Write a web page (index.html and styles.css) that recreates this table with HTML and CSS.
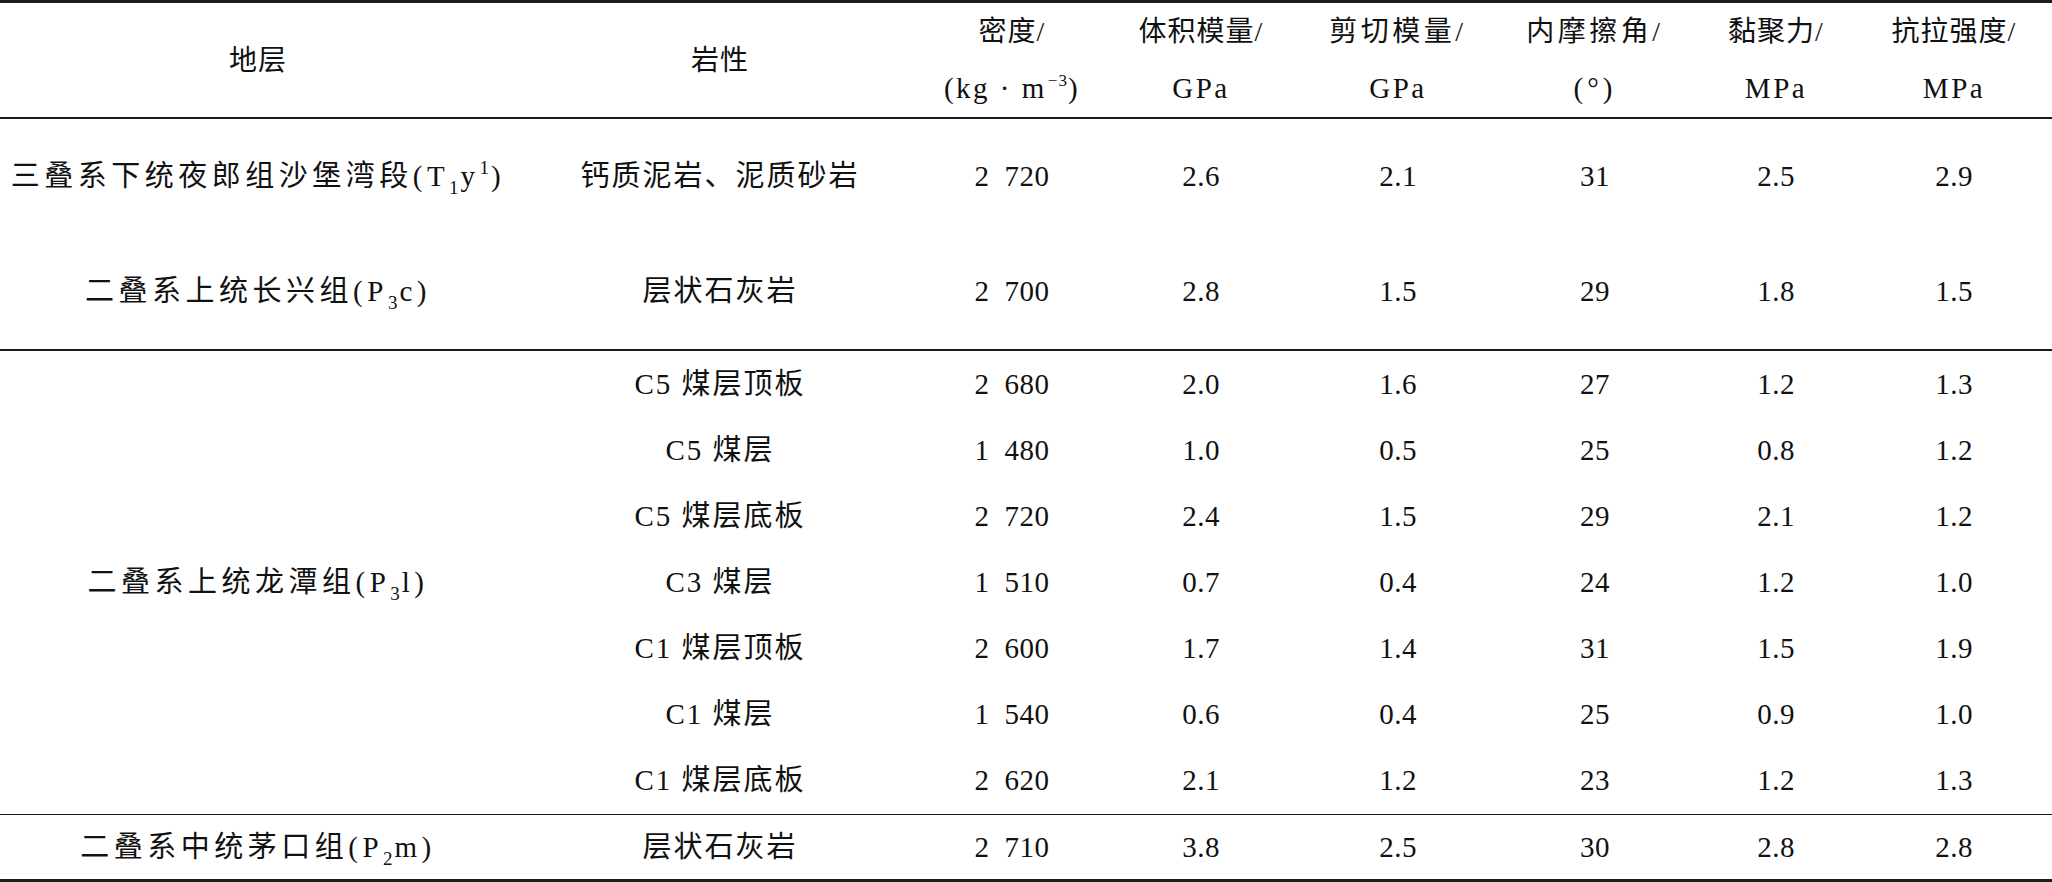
FILE: index.html
```html
<!DOCTYPE html>
<html lang="zh-CN">
<head>
<meta charset="utf-8">
<title>岩层力学参数</title>
<link rel="stylesheet" href="styles.css">
</head>
<body>
<div class="table">
  <div class="rule rule-thick"></div>

  <div class="cell head"><span class="line">地层</span></div>
  <div class="cell head"><span class="line">岩性</span></div>
  <div class="cell head"><span class="line">密度/</span><span class="line unit">(kg · m<span class="hsup">−3</span>)</span></div>
  <div class="cell head"><span class="line">体积模量/</span><span class="line unit">GPa</span></div>
  <div class="cell head"><span class="line wide">剪切模量/</span><span class="line unit">GPa</span></div>
  <div class="cell head"><span class="line wide">内摩擦角/</span><span class="line unit deg">(°)</span></div>
  <div class="cell head"><span class="line">黏聚力/</span><span class="line unit">MPa</span></div>
  <div class="cell head"><span class="line">抗拉强度/</span><span class="line unit">MPa</span></div>

  <div class="rule rule-mid"></div>

  <div class="cell strat"><span class="txt">三叠系下统夜郎组沙堡湾段(T<span class="sub">1</span>y<span class="sup">1</span>)</span></div>
  <div class="cell rock">钙质泥岩、泥质砂岩</div>
  <div class="cell num">2&#8194;720</div>
  <div class="cell num">2.6</div>
  <div class="cell num">2.1</div>
  <div class="cell num">31</div>
  <div class="cell num">2.5</div>
  <div class="cell num">2.9</div>

  <div class="cell strat"><span class="txt">二叠系上统长兴组(P<span class="sub">3</span>c)</span></div>
  <div class="cell rock">层状石灰岩</div>
  <div class="cell num">2&#8194;700</div>
  <div class="cell num">2.8</div>
  <div class="cell num">1.5</div>
  <div class="cell num">29</div>
  <div class="cell num">1.8</div>
  <div class="cell num">1.5</div>

  <div class="rule rule-mid"></div>

  <div class="cell strat span7"><span class="txt">二叠系上统龙潭组(P<span class="sub">3</span>l)</span></div>
  <div class="cell rock">C5 煤层顶板</div>
  <div class="cell num">2&#8194;680</div>
  <div class="cell num">2.0</div>
  <div class="cell num">1.6</div>
  <div class="cell num">27</div>
  <div class="cell num">1.2</div>
  <div class="cell num">1.3</div>

  <div class="cell rock">C5 煤层</div>
  <div class="cell num">1&#8194;480</div>
  <div class="cell num">1.0</div>
  <div class="cell num">0.5</div>
  <div class="cell num">25</div>
  <div class="cell num">0.8</div>
  <div class="cell num">1.2</div>

  <div class="cell rock">C5 煤层底板</div>
  <div class="cell num">2&#8194;720</div>
  <div class="cell num">2.4</div>
  <div class="cell num">1.5</div>
  <div class="cell num">29</div>
  <div class="cell num">2.1</div>
  <div class="cell num">1.2</div>

  <div class="cell rock">C3 煤层</div>
  <div class="cell num">1&#8194;510</div>
  <div class="cell num">0.7</div>
  <div class="cell num">0.4</div>
  <div class="cell num">24</div>
  <div class="cell num">1.2</div>
  <div class="cell num">1.0</div>

  <div class="cell rock">C1 煤层顶板</div>
  <div class="cell num">2&#8194;600</div>
  <div class="cell num">1.7</div>
  <div class="cell num">1.4</div>
  <div class="cell num">31</div>
  <div class="cell num">1.5</div>
  <div class="cell num">1.9</div>

  <div class="cell rock">C1 煤层</div>
  <div class="cell num">1&#8194;540</div>
  <div class="cell num">0.6</div>
  <div class="cell num">0.4</div>
  <div class="cell num">25</div>
  <div class="cell num">0.9</div>
  <div class="cell num">1.0</div>

  <div class="cell rock">C1 煤层底板</div>
  <div class="cell num">2&#8194;620</div>
  <div class="cell num">2.1</div>
  <div class="cell num">1.2</div>
  <div class="cell num">23</div>
  <div class="cell num">1.2</div>
  <div class="cell num">1.3</div>

  <div class="rule rule-thin"></div>

  <div class="cell strat"><span class="txt">二叠系中统茅口组(P<span class="sub">2</span>m)</span></div>
  <div class="cell rock">层状石灰岩</div>
  <div class="cell num">2&#8194;710</div>
  <div class="cell num">3.8</div>
  <div class="cell num">2.5</div>
  <div class="cell num">30</div>
  <div class="cell num">2.8</div>
  <div class="cell num">2.8</div>

  <div class="rule rule-thick"></div>
</div>
</body>
</html>
```

FILE: styles.css
```css
html, body {
  margin: 0;
  padding: 0;
  background: #ffffff;
}

body {
  width: 2052px;
  height: 882px;
  overflow: hidden;
  font-family: "Liberation Serif", "Noto Sans CJK SC", serif;
  color: #111111;
}

.table {
  display: grid;
  grid-template-columns: 516px 408px 176px 202px 192px 202px 160px 196px;
  grid-template-rows: 3px 114px 2px 115px 115px 2px repeat(6, 66px) 67px 1px 64px 3px;
  width: 2052px;
}

.rule {
  grid-column: 1 / -1;
  background: #1c1c1c;
}

.cell {
  display: flex;
  align-items: center;
  justify-content: center;
  white-space: nowrap;
  font-size: 29px;
  line-height: 1;
}

.head {
  flex-direction: column;
  font-size: 28px;
  line-height: 57px;
}

.head .line {
  display: block;
  letter-spacing: 1px;
}

.head .wide {
  letter-spacing: 3.5px;
}

.head .unit {
  font-size: 29px;
  letter-spacing: 2.5px;
}

.head .deg {
  letter-spacing: 4px;
}

.hsup {
  font-size: 17px;
  vertical-align: 12px;
  line-height: 0;
  letter-spacing: 1px;
  margin-left: 1px;
}

.txt {
  display: inline-block;
  line-height: 1;
}

.strat {
  letter-spacing: 4.5px;
}

.rock {
  letter-spacing: 2px;
}

.num {
  letter-spacing: 0.5px;
}

.span7 {
  grid-row: span 7;
}

.sub {
  font-size: 19px;
  vertical-align: -8px;
  line-height: 0;
  letter-spacing: 2px;
}

.sup {
  font-size: 19px;
  vertical-align: 12px;
  line-height: 0;
  letter-spacing: 2px;
}
```
